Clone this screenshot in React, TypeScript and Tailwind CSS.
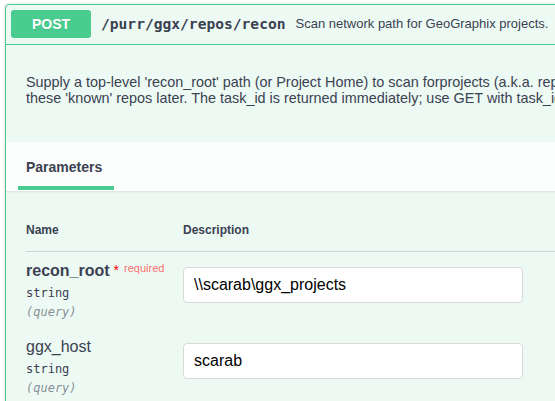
const sans = "font-['Liberation_Sans',Arial,sans-serif]";
const mono = "font-['DejaVu_Sans_Mono','Liberation_Mono',monospace]";

const params = [
  { name: "recon_root", required: true, type: "string", where: "(query)", value: "\\\\scarab\\ggx_projects" },
  { name: "ggx_host", required: false, type: "string", where: "(query)", value: "scarab" },
];

export default function App() {
  return (
    <div className={`w-[555px] h-[401px] overflow-hidden bg-white pt-[4px] pl-[5px] text-[#3b4151] ${sans}`}>
      <div className="w-[640px] rounded-[4px] border border-[#49cc90] bg-[#edfaf4] shadow-[0_0_3px_rgba(0,0,0,0.19)]">
        {/* Summary */}
        <div className="flex items-center border-b border-[#49cc90] px-[5px] pt-[5px] pb-[6px]">
          <span className="flex h-[28px] w-[80px] items-center justify-center rounded-[3px] bg-[#49cc90] text-[14px] font-bold text-white [text-shadow:0_1px_0_rgba(0,0,0,0.1)]">
            POST
          </span>
          <span className={`px-[10px] text-[14.6px] font-bold whitespace-nowrap ${mono}`}>/purr/ggx/repos/recon</span>
          <span className="text-[13px] whitespace-nowrap">Scan network path for GeoGraphix projects.</span>
        </div>

        {/* Description */}
        <div className="px-[20px] pt-[29px] pb-[36px]">
          <p className="text-[14.4px] leading-[16px] whitespace-nowrap">
            Supply a top-level 'recon_root' path (or Project Home) to scan forprojects (a.k.a. repositories) and save
            <br />
            these 'known' repos later. The task_id is returned immediately; use GET with task_id to check its status.
          </p>
        </div>

        {/* Section header */}
        <div className="bg-white/80 pl-[12px] pt-[17px] pb-[1px] shadow-[0_1px_2px_rgba(0,0,0,0.1)]">
          <div className="w-[96px]">
            <div className="pl-[8px] text-[14px] font-bold leading-[16px]">Parameters</div>
            <div className="mt-[11px] h-[4px] bg-[#49cc90]" />
          </div>
        </div>

        {/* Table */}
        <div className="px-[20px]">
          <div className="flex border-b border-[rgba(59,65,81,0.2)] pt-[32px] pb-[14px] text-[12px] font-bold leading-[14px]">
            <div className="w-[157px]">Name</div>
            <div>Description</div>
          </div>
          {params.map((p) => (
            <div key={p.name} className="flex h-[76px]">
              <div className="w-[157px] pt-[10px]">
                <div className="flex items-start leading-[18px] whitespace-nowrap">
                  <span className={`text-[16px] ${p.required ? "font-bold" : ""}`}>{p.name}</span>
                  {p.required && (
                    <>
                      <span className="ml-[4px] text-[14px] leading-[16px] text-[red]">*</span>
                      <span className="ml-[5px] text-[11px] leading-[12px] text-[rgba(255,0,0,0.6)]">required</span>
                    </>
                  )}
                </div>
                <div className={`mt-[5px] text-[12px] leading-[16px] ${mono}`}>{p.type}</div>
                <div className={`mt-[3px] text-[12px] italic leading-[16px] text-[rgba(59,65,81,0.6)] ${mono}`}>{p.where}</div>
              </div>
              <div className="pt-[15px]">
                <input
                  readOnly
                  value={p.value}
                  className={`h-[36px] w-[340px] rounded-[4px] border border-[#d9d9d9] bg-white px-[10px] text-[16px] text-black outline-none ${sans}`}
                />
              </div>
            </div>
          ))}
        </div>
      </div>
    </div>
  );
}
